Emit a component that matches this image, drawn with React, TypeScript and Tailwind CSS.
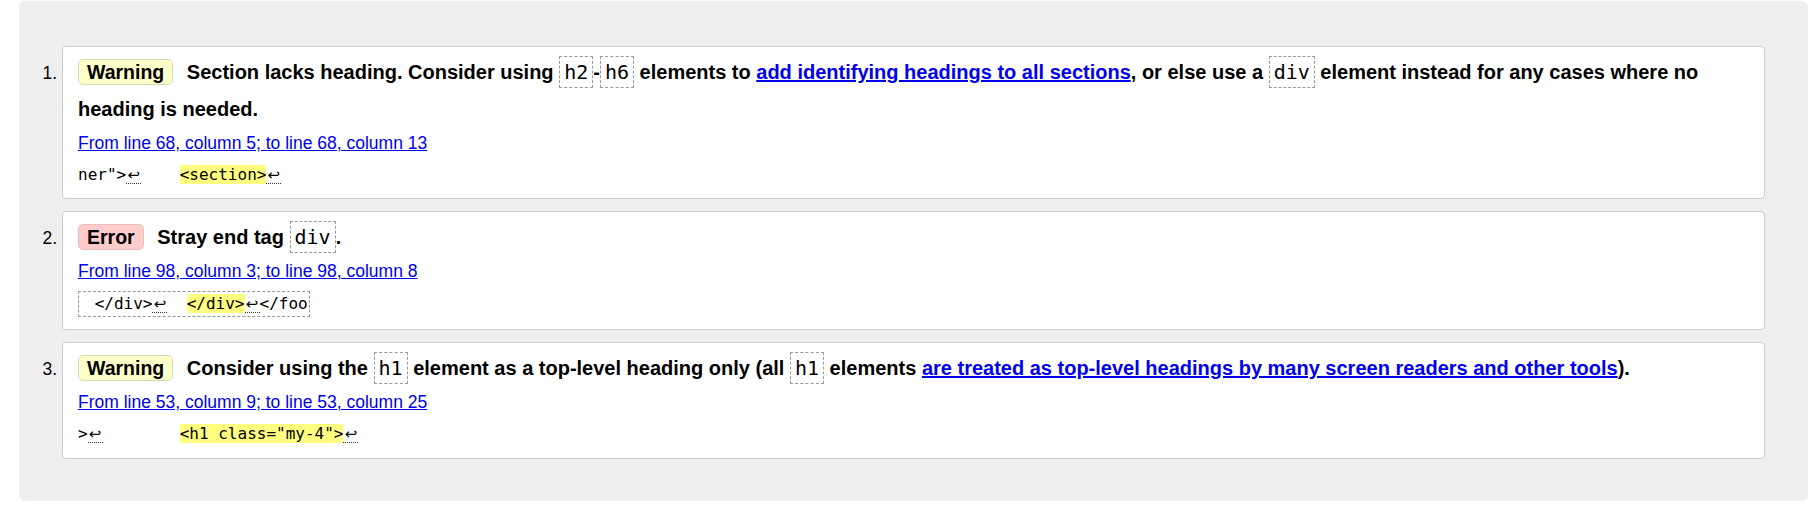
import React from "react";

const Code = ({ children }: { children: React.ReactNode }) => (
  <code className="font-['DejaVu_Sans_Mono',monospace] font-normal text-[20px] border border-dashed border-[#999] px-[4px] py-[3px]">
    {children}
  </code>
);

const LF = () => (
  <span className="inline-block w-[15px] leading-[16px] border-b border-dotted border-[#333] text-center font-['DejaVu_Sans',sans-serif] text-[15px]">
    ↩
  </span>
);

const Mark = ({ children }: { children: React.ReactNode }) => (
  <mark className="bg-[#ffff80] text-black">{children}</mark>
);

const Badge = ({ kind }: { kind: "Warning" | "Error" }) => (
  <span
    className={
      kind === "Warning"
        ? "inline-block text-[19.5px] leading-[24px] px-[8px] mr-[8px] rounded-[5px] border border-[#d9d9b0] bg-[#ffffcc] text-black"
        : "inline-block text-[19.5px] leading-[24px] px-[8px] mr-[8px] rounded-[5px] border border-[#e8bcbc] bg-[#ffcccc] text-black"
    }
  >
    {kind}
  </span>
);

const Link = ({ children }: { children: React.ReactNode }) => (
  <a href="#" className="text-[#0000ee] underline">
    {children}
  </a>
);

const Card = ({ children, pb }: { children: React.ReactNode; pb: string }) => (
  <li className={`bg-white border border-[#cccccc] rounded-[4px] pt-[7px] pl-[15px] pr-[15px] ${pb}`}>{children}</li>
);

const Msg = ({ children }: { children: React.ReactNode }) => (
  <p className="text-[20px] font-bold leading-[37px] text-black">{children}</p>
);

const Loc = ({ children }: { children: React.ReactNode }) => (
  <p className="mt-[5px] leading-[21px] text-[17.5px]">
    <Link>{children}</Link>
  </p>
);

const mono = "font-['DejaVu_Sans_Mono',monospace] text-[16px] whitespace-pre text-black";

export default function App() {
  return (
    <div className="min-h-[506px] bg-white pt-[1px] pl-[19px] pr-[4px] font-['Liberation_Sans',Arial,sans-serif] text-black">
      <div className="bg-[#eeeeee] rounded-[6px] pt-[45px] pb-[42px] px-[43px]">
        <ol className="list-decimal flex flex-col gap-[12px] text-[17.5px]">
          <Card pb="pb-[10px]">
            <Msg>
              <Badge kind="Warning" /> Section lacks heading. Consider using <Code>h2</Code>-<Code>h6</Code> elements to{" "}
              <Link>add identifying headings to all sections</Link>, or else use a <Code>div</Code> element instead for any
              cases where no heading is needed.
            </Msg>
            <Loc>From line 68, column 5; to line 68, column 13</Loc>
            <p className={`mt-[8px] leading-[26px] ${mono}`}>
              {'ner">'}
              <LF />
              {"    "}
              <Mark>{"<section>"}</Mark>
              <LF />
            </p>
          </Card>
          <Card pb="pb-[13px]">
            <Msg>
              <Badge kind="Error" /> Stray end tag <Code>div</Code>.
            </Msg>
            <Loc>From line 98, column 3; to line 98, column 8</Loc>
            <p className="mt-[8px] leading-[26px] h-[26px]">
              <span className={`inline-block leading-[24px] border border-dashed border-[#999] pl-[6px] pr-[1px] ${mono}`}>
                {" </div>"}
                <LF />
                {"  "}
                <Mark>{"</div>"}</Mark>
                <LF />
                {"</foo"}
              </span>
            </p>
          </Card>
          <Card pb="pb-[11px]">
            <Msg>
              <Badge kind="Warning" /> Consider using the <Code>h1</Code> element as a top-level heading only (all{" "}
              <Code>h1</Code> elements <Link>are treated as top-level headings by many screen readers and other tools</Link>).
            </Msg>
            <Loc>From line 53, column 9; to line 53, column 25</Loc>
            <p className={`mt-[8px] leading-[26px] ${mono}`}>
              {">"}
              <LF />
              {"        "}
              <Mark>{'<h1 class="my-4">'}</Mark>
              <LF />
            </p>
          </Card>
        </ol>
      </div>
    </div>
  );
}
